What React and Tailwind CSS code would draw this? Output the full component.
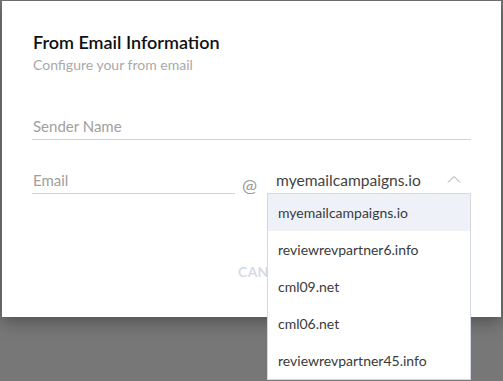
import React, { useState } from 'react'

const domains = [
  'myemailcampaigns.io',
  'reviewrevpartner6.info',
  'cml09.net',
  'cml06.net',
  'reviewrevpartner45.info',
]

function ChevronUp() {
  return (
    <svg width="14" height="8" viewBox="0 0 14 8" fill="none" className="mb-[5px]">
      <path d="M1 7.5L7 1.5L13 7.5" stroke="#9aa0ab" strokeWidth="1" />
    </svg>
  )
}

function DomainSelect() {
  const [selected, setSelected] = useState(domains[0])
  return (
    <div className="relative w-[204px]">
      <div className="flex h-[26px] items-center justify-between pl-[9px] pr-[10px] text-[15.6px] text-[#444]">
        <span>{selected}</span>
        <ChevronUp />
      </div>
      <ul className="absolute left-0 top-[25px] z-10 w-[204px] border border-[#d3d9e3] bg-white">
        {domains.map((d) => (
          <li
            key={d}
            onClick={() => setSelected(d)}
            className={`flex h-[37px] items-center px-[10px] text-[14px] text-[#3a3a3a] ${
              d === selected ? 'bg-[#eef2f8]' : ''
            }`}
          >
            {d}
          </li>
        ))}
      </ul>
    </div>
  )
}

export default function App() {
  return (
    <div className="h-[381px] w-[503px] overflow-hidden bg-[#777777] pl-[2px] pt-[1px] font-['Lato','Liberation_Sans',sans-serif]">
      <div className="h-[316px] w-[499px] bg-white pl-[30px] pr-[30px] pt-[30px] shadow-[0_4px_16px_rgba(0,0,0,0.35)]">
        <h2 className="pl-[1px] text-[18px] font-semibold leading-[22px] text-[#111]">From Email Information</h2>
        <p className="mt-[3px] pl-[1px] text-[14px] leading-[18px] text-[#a9a9a9]">Configure your from email</p>

        <div className="mt-[42px] w-[439px] border-b border-[#cfd4dc] pb-[3px] pl-[1px] text-[15px] leading-[20px] text-[#a0a0a0]">
          Sender Name
        </div>

        <div className="mt-[29px] flex items-end">
          <div className="w-[204px] border-b border-[#cfd4dc] pb-[3px] pl-[1px] text-[15px] leading-[20px] text-[#a0a0a0]">
            Email
          </div>
          <span className="mb-[-1px] ml-[7px] w-[16px] text-[18px] leading-[20px] text-[#9a9a9a]">@</span>
          <div className="-mt-[1px] ml-[9px] self-start">
            <DomainSelect />
          </div>
        </div>

        <div className="mt-[67px] flex gap-[24px] pl-[206px] text-[14px] font-semibold tracking-wide text-[#d3d7e4]">
          <span>CANCEL</span>
          <span>SAVE</span>
        </div>
      </div>
    </div>
  )
}
